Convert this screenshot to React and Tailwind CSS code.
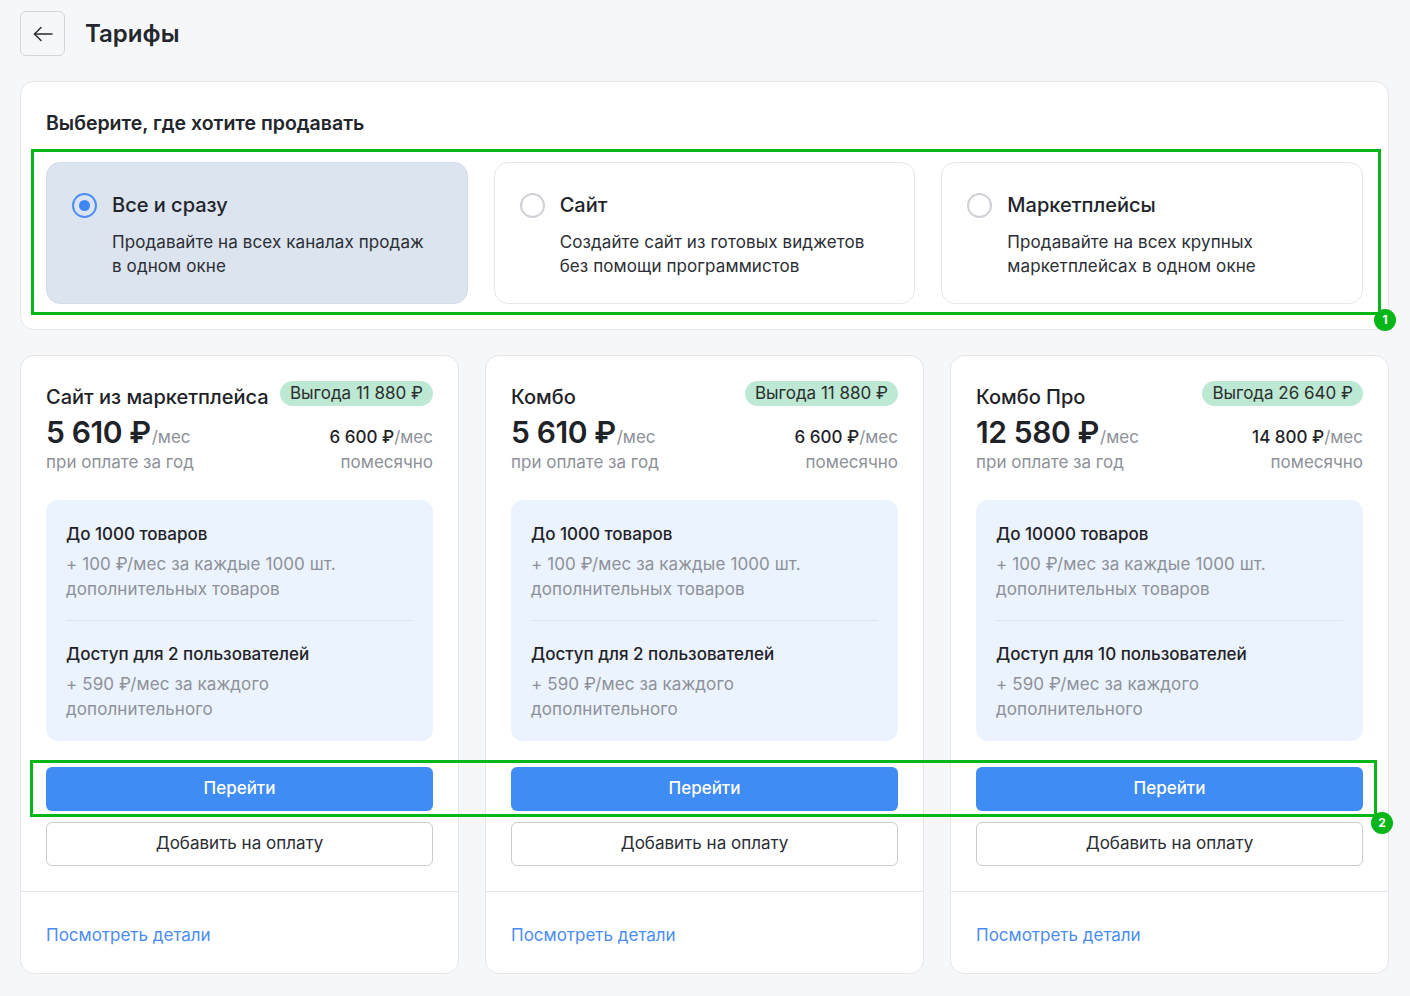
import React from "react";

const FONT = { fontFamily: "Inter, 'Noto Sans', sans-serif" };

function Radio({ checked }) {
  if (checked) {
    return (
      <span className="flex h-[25px] w-[25px] shrink-0 items-center justify-center rounded-full border-[2.5px] border-[#4b8ef5]">
        <span className="block h-[11px] w-[11px] rounded-full bg-[#3f87f4]" />
      </span>
    );
  }
  return <span className="block h-[25px] w-[25px] shrink-0 rounded-full border-[2.5px] border-[#cdd0d5] bg-white" />;
}

function Option({ checked, title, lines }) {
  return (
    <div
      className={
        "flex gap-[15px] rounded-[14px] border pl-[25px] pr-4 pt-[28px] pb-[25px] " +
        (checked ? "border-[#d3dde9] bg-[#dbe4ef]" : "border-[#e4e6ea] bg-white")
      }
    >
      <div className="shrink-0 pt-[2px]">
        <Radio checked={checked} />
      </div>
      <div>
        <div className="text-[20px] font-medium leading-7 text-[#22252b]">{title}</div>
        <div className="mt-[11px] text-[17px] leading-6 tracking-[0.1px] text-[#2b2e34]">
          {lines.map((l) => (
            <div key={l}>{l}</div>
          ))}
        </div>
      </div>
    </div>
  );
}

function Plan({ name, badge, price, monthly, goods, users }) {
  return (
    <div className="flex flex-col rounded-[14px] border border-[#e4e6ea] bg-white">
      <div className="px-[25px] pt-[25px]">
        <div className="flex items-start justify-between gap-2">
          <div className="pt-[2px] text-[20px] font-medium leading-7 text-[#1f2227]">{name}</div>
          <div className="rounded-full bg-[#bde8d3] px-[10px] text-[17px] leading-[25px] text-[#2b2f2d]">
            {badge}
          </div>
        </div>
        <div className="mt-[4px] flex items-baseline justify-between">
          <div className="flex items-baseline">
            <span className="text-[30px] font-semibold leading-[34px] tracking-[-0.4px] text-[#1f2227]">{price}</span>
            <span className="ml-[1px] text-[17px] text-[#8d9199]">/мес</span>
          </div>
          <div className="flex items-baseline text-[17px]">
            <span className="font-medium text-[#1f2227]">{monthly}</span>
            <span className="text-[#8d9199]">/мес</span>
          </div>
        </div>
        <div className="-mt-[1px] flex justify-between text-[17px] leading-6 text-[#8d9199]">
          <span>при оплате за год</span>
          <span>помесячно</span>
        </div>

        <div className="mt-[26px] rounded-[12px] bg-[#ebf3fe] px-5 pt-[22px] pb-[19px]">
          <div className="text-[17px] font-medium leading-6 text-[#1f2227]">{goods}</div>
          <div className="mt-[6px] text-[17px] leading-[25px] tracking-[0.1px] text-[#8d9199]">
            <div>+ 100 ₽/мес за каждые 1000 шт.</div>
            <div>дополнительных товаров</div>
          </div>
          <div className="mt-[18px] h-px bg-[#dde3ec]" />
          <div className="mt-[21px] text-[17px] font-medium leading-6 text-[#1f2227]">{users}</div>
          <div className="mt-[6px] text-[17px] leading-[25px] tracking-[0.1px] text-[#8d9199]">
            <div>+ 590 ₽/мес за каждого</div>
            <div>дополнительного</div>
          </div>
        </div>

        <button className="mt-[26px] flex h-[44px] w-full items-center justify-center rounded-[6px] bg-[#3e8cf4] text-[17px] font-medium text-white">
          Перейти
        </button>
        <button className="mt-[11px] flex h-[44px] w-full items-center justify-center rounded-[6px] border border-[#c9ccd2] bg-white text-[17px] text-[#2a2d33]">
          Добавить на оплату
        </button>
      </div>
      <div className="mt-[25px] border-t border-[#e4e6ea] px-[25px] pt-[31px] pb-[26px]">
        <span className="text-[17px] leading-6 text-[#4a8df2]">Посмотреть детали</span>
      </div>
    </div>
  );
}

export default function App() {
  return (
    <div className="relative min-h-[996px] bg-[#f6f7f9] px-5 pt-[11px] pb-[23px]" style={FONT}>
      <div className="flex items-center gap-5">
        <button className="flex h-[45px] w-[45px] items-center justify-center rounded-[6px] border border-[#d2d5da] bg-[#f6f7f9]">
          <svg width="24" height="24" viewBox="0 0 24 24" fill="none" stroke="#2a2d33" strokeWidth="1.5" strokeLinecap="round" strokeLinejoin="round">
            <path d="M21 12H3.5" />
            <path d="M10 5.5L3.5 12l6.5 6.5" />
          </svg>
        </button>
        <h1 className="text-[24px] font-semibold text-[#24272d]">Тарифы</h1>
      </div>

      <div className="mt-[25px] mr-px rounded-[14px] border border-[#e4e6ea] bg-white px-[25px] pt-[29px] pb-[25px]">
        <div className="text-[19.5px] font-semibold leading-6 text-[#22252b]">Выберите, где хотите продавать</div>
        <div className="mt-[27px] grid grid-cols-3 gap-[26px]">
          <Option checked title="Все и сразу" lines={["Продавайте на всех каналах продаж", "в одном окне"]} />
          <Option title="Сайт" lines={["Создайте сайт из готовых виджетов", "без помощи программистов"]} />
          <Option title="Маркетплейсы" lines={["Продавайте на всех крупных", "маркетплейсах в одном окне"]} />
        </div>
      </div>

      <div className="mt-[25px] mr-px grid grid-cols-3 gap-[26px]">
        <Plan name="Сайт из маркетплейса" badge="Выгода 11 880 ₽" price="5 610 ₽" monthly="6 600 ₽" goods="До 1000 товаров" users="Доступ для 2 пользователей" />
        <Plan name="Комбо" badge="Выгода 11 880 ₽" price="5 610 ₽" monthly="6 600 ₽" goods="До 1000 товаров" users="Доступ для 2 пользователей" />
        <Plan name="Комбо Про" badge="Выгода 26 640 ₽" price="12 580 ₽" monthly="14 800 ₽" goods="До 10000 товаров" users="Доступ для 10 пользователей" />
      </div>

      {/* annotation overlays */}
      <div className="pointer-events-none absolute left-[31px] top-[149px] h-[166px] w-[1350px] border-[3.5px] border-[#07b71a]" />
      <div className="pointer-events-none absolute left-[1374px] top-[309px] flex h-[22px] w-[22px] items-center justify-center rounded-full bg-[#07b71a] text-[12px] font-bold text-white">
        1
      </div>
      <div className="pointer-events-none absolute left-[30px] top-[760px] h-[57px] w-[1347px] border-[3.5px] border-[#07b71a]" />
      <div className="pointer-events-none absolute left-[1371px] top-[812px] flex h-[22px] w-[22px] items-center justify-center rounded-full bg-[#07b71a] text-[12px] font-bold text-white">
        2
      </div>
    </div>
  );
}
